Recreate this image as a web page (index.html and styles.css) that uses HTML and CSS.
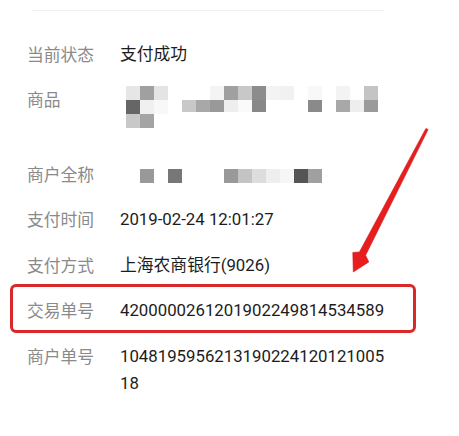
FILE: index.html
```html
<!DOCTYPE html>
<html lang="zh-CN">
<head>
<meta charset="utf-8">
<title>交易详情</title>
<link rel="stylesheet" href="styles.css">
</head>
<body>
<div class="page">
  <div class="divider"></div>
  <div class="list">
    <div class="row">
      <div class="label">当前状态</div>
      <div class="value">支付成功</div>
    </div>
    <div class="row">
      <div class="label">商品</div>
      <div class="value">
        <svg class="mosaic-tall" width="260" height="56" viewBox="0 0 260 56">
          <rect x="6" y="0" width="14" height="14" fill="#e6e6e6"/>
          <rect x="20" y="0" width="14" height="14" fill="#a0a0a0"/>
          <rect x="34" y="0" width="14" height="14" fill="#e4e4e4"/>
          <rect x="90" y="0" width="14" height="14" fill="#f4f4f4"/>
          <rect x="104" y="0" width="14" height="14" fill="#a0a0a0"/>
          <rect x="118" y="0" width="14" height="14" fill="#c8c8c8"/>
          <rect x="132" y="0" width="14" height="14" fill="#8c8c8c"/>
          <rect x="146" y="0" width="14" height="14" fill="#f3f3f3"/>
          <rect x="160" y="0" width="14" height="14" fill="#f1f1f1"/>
          <rect x="188" y="0" width="14" height="14" fill="#f8f8f8"/>
          <rect x="216" y="0" width="14" height="14" fill="#f3f3f3"/>
          <rect x="244" y="0" width="14" height="14" fill="#c4c4c4"/>
          <rect x="6" y="14" width="14" height="14" fill="#666666"/>
          <rect x="20" y="14" width="14" height="14" fill="#f0f0f0"/>
          <rect x="34" y="14" width="14" height="14" fill="#f8f8f8"/>
          <rect x="62" y="14" width="14" height="12" fill="#c8c8c8"/>
          <rect x="76" y="14" width="14" height="12" fill="#a8a8a8"/>
          <rect x="90" y="14" width="14" height="12" fill="#999999"/>
          <rect x="104" y="14" width="14" height="12" fill="#eeeeee"/>
          <rect x="118" y="14" width="14" height="12" fill="#fafafa"/>
          <rect x="132" y="14" width="14" height="12" fill="#888888"/>
          <rect x="188" y="14" width="14" height="12" fill="#8a8a8a"/>
          <rect x="216" y="14" width="14" height="12" fill="#a8a8a8"/>
          <rect x="230" y="14" width="14" height="12" fill="#eeeeee"/>
          <rect x="244" y="14" width="14" height="12" fill="#9a9a9a"/>
          <rect x="6" y="28" width="14" height="14" fill="#c8c8c8"/>
          <rect x="20" y="28" width="14" height="14" fill="#a4a4a4"/>
        </svg>
      </div>
    </div>
    <div class="row">
      <div class="label">商户全称</div>
      <div class="value">
        <svg class="mosaic-line" width="260" height="14" viewBox="0 0 260 14">
          <rect x="20" y="0" width="14" height="14" fill="#999999"/>
          <rect x="48" y="0" width="14" height="14" fill="#777777"/>
          <rect x="104" y="0" width="14" height="14" fill="#999999"/>
          <rect x="118" y="0" width="14" height="14" fill="#c4c4c4"/>
          <rect x="132" y="0" width="14" height="14" fill="#dddddd"/>
          <rect x="146" y="0" width="14" height="14" fill="#eeeeee"/>
          <rect x="160" y="0" width="14" height="14" fill="#f6f6f6"/>
          <rect x="174" y="0" width="14" height="14" fill="#555555"/>
          <rect x="188" y="0" width="14" height="14" fill="#a0a0a0"/>
        </svg>
      </div>
    </div>
    <div class="row">
      <div class="label">支付时间</div>
      <div class="value">2019-02-24 12:01:27</div>
    </div>
    <div class="row">
      <div class="label">支付方式</div>
      <div class="value">上海农商银行(9026)</div>
    </div>
    <div class="row row-marked">
      <div class="label">交易单号</div>
      <div class="value">4200000261201902249814534589</div>
    </div>
    <div class="row">
      <div class="label">商户单号</div>
      <div class="value">104819595621319022412012100518</div>
    </div>
  </div>
  <svg class="arrow" width="459" height="436" viewBox="0 0 459 436">
    <polygon points="353.3,272 368.8,262 365.6,255.2 428.1,129.6 425.9,128.4 359.4,252 352.8,252.4" fill="#e81e1e" stroke="#cf1a1a" stroke-width="0.6" stroke-linejoin="round"/>
  </svg>
</div>
</body>
</html>
```

FILE: styles.css
```css
html, body {
  margin: 0;
  padding: 0;
  background: #ffffff;
}

.page {
  position: relative;
  width: 459px;
  height: 436px;
  overflow: hidden;
}

.divider {
  margin: 10px 0 0 32px;
  width: 352px;
  height: 1px;
  background: #f0f0f0;
}

.list {
  padding-top: 20.25px;
}

.row {
  position: relative;
  display: grid;
  grid-template-columns: 93px 268px;
  padding: 9.25px 0 9.25px 27px;
  font-size: 16.8px;
  line-height: 27px;
}

.label {
  color: #8a8a8a;
  font-family: "Noto Sans CJK SC", "Noto Sans", sans-serif;
}

.value {
  color: #1c1c1c;
  font-family: Roboto, "Noto Sans CJK SC", sans-serif;
  word-break: break-all;
}

.mosaic-tall {
  display: block;
}

.mosaic-line {
  display: block;
  margin-top: 8px;
}

.row-marked::after {
  content: "";
  position: absolute;
  left: 10px;
  top: -4px;
  width: 406px;
  height: 49px;
  box-sizing: border-box;
  border: 3px solid #d82828;
  border-radius: 6px;
}

.arrow {
  position: absolute;
  left: 0;
  top: 0;
  pointer-events: none;
}
```
